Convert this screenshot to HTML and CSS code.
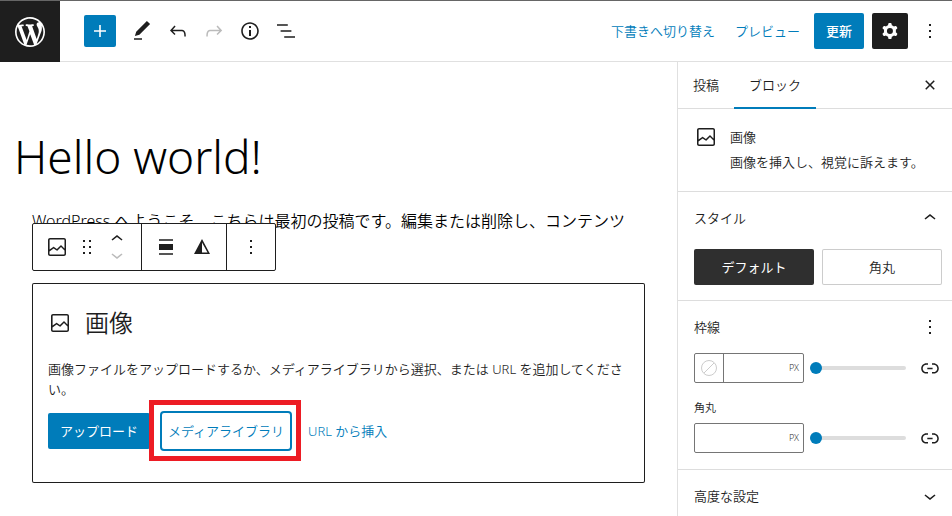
FILE: index.html
```html
<!DOCTYPE html>
<html lang="ja">
<head>
  <meta charset="UTF-8">
  <meta name="viewport" content="width=device-width, initial-scale=1.0">
  <title>投稿を編集</title>
  <link rel="stylesheet" href="styles.css">
</head>
<body>
  <svg class="sprite" aria-hidden="true">
    <symbol id="icon-image" viewBox="0 0 24 24"><path d="M19 3H5c-1.1 0-2 .9-2 2v14c0 1.1.9 2 2 2h14c1.1 0 2-.9 2-2V5c0-1.1-.9-2-2-2zM5 4.500h14c.3 0 .5.2.5.5v8.400l-3-2.900c-.3-.3-.8-.3-1 0L11.900 14 9 12c-.3-.2-.6-.2-.8 0l-3.600 2.600V5c-.1-.3.1-.5.4-.5zm14 15H5c-.3 0-.5-.2-.5-.5v-2.400l4.100-3 3 1.900c.3.2.7.2.9-.1L16 12l3.500 3.400V19c0 .3-.2.5-.5.5z"/></symbol>
    <symbol id="icon-more" viewBox="0 0 24 24"><path d="M13 19h-2v-2h2v2zm0-6h-2v-2h2v2zm0-6h-2V5h2v2z"/></symbol>
    <symbol id="icon-up" viewBox="0 0 24 24"><path d="M6.500 12.400L12 8l5.500 4.400-.9 1.200L12 10l-4.500 3.600-1-1.200z"/></symbol>
    <symbol id="icon-down" viewBox="0 0 24 24"><path d="M17.500 11.600L12 16l-5.500-4.400.9-1.200L12 14l4.500-3.600 1 1.200z"/></symbol>
    <symbol id="icon-link" viewBox="0 0 24 24"><path d="M15.600 7.200H14v1.500h1.600c2 0 3.700 1.700 3.700 3.700s-1.700 3.700-3.700 3.700H14v1.500h1.600c2.800 0 5.200-2.300 5.200-5.200 0-2.900-2.300-5.200-5.200-5.200zM4.700 12.400c0-2 1.700-3.700 3.700-3.700H10V7.200H8.400c-2.900 0-5.200 2.300-5.200 5.200 0 2.900 2.300 5.200 5.200 5.200H10v-1.500H8.400c-2 0-3.700-1.700-3.700-3.700zm4.600.9h5.300v-1.500H9.300v1.500z"/></symbol>
  </svg>

  <header class="header">
    <a class="logo" href="#" aria-label="投稿一覧">
      <svg width="36" height="36" viewBox="-2 -2 24 24"><path d="M20 10c0-5.510-4.490-10-10-10C4.480 0 0 4.490 0 10c0 5.520 4.480 10 10 10 5.510 0 10-4.480 10-10zM7.780 15.370L4.370 6.220c.55-.02 1.170-.08 1.170-.08.5-.06.44-1.130-.06-1.110 0 0-1.450.11-2.370.11-.18 0-.37 0-.58-.01C4.120 2.690 6.870 1.110 10 1.110c2.330 0 4.450.87 6.050 2.340-.68-.11-1.650.39-1.650 1.580 0 .74.45 1.360.9 2.100.35.61.55 1.360.55 2.460 0 1.490-1.400 5-1.400 5l-3.030-8.370c.54-.02.82-.17.82-.17.5-.05.44-1.250-.06-1.220 0 0-1.440.12-2.380.12-.87 0-2.330-.12-2.330-.12-.5-.03-.56 1.200-.06 1.220l.92.08 1.260 3.410zM17.410 10c.24-.64.74-1.870.43-4.250.7 1.290 1.050 2.710 1.050 4.250 0 3.290-1.730 6.240-4.400 7.780.97-2.590 1.940-5.200 2.920-7.780zM6.100 18.090C3.120 16.650 1.110 13.530 1.110 10c0-1.300.23-2.480.72-3.590C3.250 10.300 4.670 14.200 6.100 18.090zm4.030-6.630l2.580 6.980c-.86.29-1.760.45-2.710.45-.79 0-1.570-.11-2.290-.33.81-2.380 1.620-4.740 2.420-7.100z"/></svg>
    </a>
    <div class="tools">
      <button class="btn-add" aria-label="ブロックを追加"><svg class="icon" viewBox="0 0 24 24"><path d="M18 11.200h-5.200V6h-1.600v5.200H6v1.600h5.200V18h1.600v-5.200H18z"/></svg></button>
      <button class="tool" aria-label="ツール"><svg class="icon" viewBox="0 0 24 24"><path d="M20.100 5.100L16.900 2 6.200 12.700l-1.300 4.400 4.500-1.300L20.100 5.100zM4 20.800h8v-1.500H4v1.500z"/></svg></button>
      <button class="tool" aria-label="元に戻す"><svg class="icon" viewBox="0 0 24 24"><path d="M18.300 11.700c-.6-.6-1.400-.9-2.300-.9H6.700l2.900-3.300-1.100-1-4.500 5L8.500 16l1-1-2.700-2.700H16c.5 0 .9.2 1.300.5 1 1 1 3.400 1 4.500v.3h1.500v-.2c0-1.500 0-4.300-1.500-5.700z"/></svg></button>
      <button class="tool" aria-label="やり直す" disabled><svg class="icon" viewBox="0 0 24 24"><path d="M15.600 6.500l-1.100 1 2.900 3.300H8c-.9 0-1.700.3-2.300.9-1.400 1.500-1.400 4.200-1.400 5.600v.2h1.500v-.3c0-1.100 0-3.500 1-4.500.3-.3.7-.5 1.300-.5h9.200L14.500 15l1.100 1.100 4.600-4.600-4.600-5z"/></svg></button>
      <button class="tool" aria-label="詳細"><svg class="icon" viewBox="0 0 24 24"><path d="M12 3.200c-4.800 0-8.800 3.900-8.800 8.800 0 4.800 3.900 8.800 8.800 8.800 4.800 0 8.800-3.900 8.800-8.800 0-4.800-4-8.800-8.800-8.800zm0 16c-4 0-7.200-3.300-7.200-7.200C4.800 8 8 4.800 12 4.800s7.200 3.300 7.200 7.200c0 4-3.200 7.200-7.200 7.200zM11 17h2v-6h-2v6zm0-8h2V7h-2v2z"/></svg></button>
      <button class="tool" aria-label="リスト表示"><svg class="icon" viewBox="0 0 24 24"><path d="M13.800 5.200H3v1.500h10.800V5.200zm-3.600 12v1.500H21v-1.500H10.200zm7.200-6H6.600v1.500h10.800v-1.500z"/></svg></button>
    </div>
    <div class="actions">
      <button class="btn-text">下書きへ切り替え</button>
      <button class="btn-text">プレビュー</button>
      <button class="btn btn-primary btn-update">更新</button>
      <button class="btn-settings" aria-label="設定"><svg class="icon" viewBox="0 0 24 24"><path fill-rule="evenodd" d="M10.289 4.836A1 1 0 0111.275 4h1.306a1 1 0 01.987.836l.244 1.466c.787.26 1.503.679 2.108 1.218l1.393-.522a1 1 0 011.216.437l.653 1.130a1 1 0 01-.23 1.273l-1.148.944a6.025 6.025 0 010 2.435l1.149.946a1 1 0 01.23 1.272l-.653 1.130a1 1 0 01-1.216.437l-1.394-.522c-.605.54-1.320.958-2.108 1.218l-.244 1.466a1 1 0 01-.987.836h-1.306a1 1 0 01-.986-.836l-.244-1.466a5.995 5.995 0 01-2.108-1.218l-1.394.522a1 1 0 01-1.217-.436l-.653-1.131a1 1 0 01.23-1.272l1.149-.946a6.026 6.026 0 010-2.435l-1.148-.944a1 1 0 01-.23-1.272l.653-1.131a1 1 0 011.217-.437l1.393.522a5.994 5.994 0 012.108-1.218l.244-1.466zM14.929 12a3 3 0 11-6 0 3 3 0 016 0z"/></svg></button>
      <button class="btn-more" aria-label="オプション"><svg class="icon"><use href="#icon-more"/></svg></button>
    </div>
  </header>

  <div class="layout">
    <main class="editor">
      <h1 class="post-title">Hello world!</h1>
      <div class="blocks">
        <p class="paragraph">WordPress へようこそ。こちらは最初の投稿です。編集または削除し、コンテンツ</p>

        <div class="toolbar" role="toolbar" aria-label="ブロックツール">
          <div class="toolbar-group toolbar-move">
            <button class="tb" aria-label="画像"><svg class="icon"><use href="#icon-image"/></svg></button>
            <button class="tb" aria-label="ドラッグ"><svg class="icon" viewBox="0 0 24 24"><path d="M8 7h2V5H8v2zm0 6h2v-2H8v2zm0 6h2v-2H8v2zm6-14v2h2V5h-2zm0 8h2v-2h-2v2zm0 6h2v-2h-2v2z"/></svg></button>
            <div class="movers">
              <button class="mover" aria-label="上に移動"><svg class="icon"><use href="#icon-up"/></svg></button>
              <button class="mover" aria-label="下に移動" disabled><svg class="icon"><use href="#icon-down"/></svg></button>
            </div>
          </div>
          <div class="toolbar-group toolbar-style">
            <button class="tb" aria-label="配置"><svg class="icon" viewBox="0 0 24 24"><path d="M5 15h14V9H5v6zm0 4.800h14v-1.500H5v1.500zM5 4.200v1.500h14V4.200H5z"/></svg></button>
            <button class="tb" aria-label="デュオトーン"><svg class="icon" viewBox="0 0 24 24"><path fill-rule="evenodd" d="M12 4l8 15H4L12 4zm0 3.500v10h5.500L12 7.500z"/></svg></button>
          </div>
          <div class="toolbar-group toolbar-options">
            <button class="tb" aria-label="オプション"><svg class="icon"><use href="#icon-more"/></svg></button>
          </div>
        </div>

        <section class="placeholder">
          <h2 class="placeholder-title"><svg class="icon"><use href="#icon-image"/></svg>画像</h2>
          <p class="placeholder-text">画像ファイルをアップロードするか、メディアライブラリから選択、または URL を追加してください。</p>
          <div class="placeholder-actions">
            <button class="btn btn-primary">アップロード</button>
            <button class="btn-media">メディアライブラリ</button>
            <button class="btn-text btn-url">URL から挿入</button>
          </div>
        </section>
      </div>
    </main>

    <aside class="sidebar">
      <div class="tabs" role="tablist">
        <button class="tab" role="tab" aria-selected="false">投稿</button>
        <button class="tab active" role="tab" aria-selected="true">ブロック</button>
        <button class="close" aria-label="設定を閉じる"><svg class="icon" viewBox="0 0 24 24"><path d="M12 13.060l3.712 3.713 1.061-1.060L13.061 12l3.712-3.712-1.060-1.060L12 10.938 8.288 7.227l-1.061 1.060L10.939 12l-3.712 3.712 1.060 1.061L12 13.061z"/></svg></button>
      </div>

      <div class="block-card">
        <svg class="icon"><use href="#icon-image"/></svg>
        <div>
          <h2 class="block-name">画像</h2>
          <p class="block-desc">画像を挿入し、視覚に訴えます。</p>
        </div>
      </div>

      <section class="panel">
        <button class="panel-head" aria-expanded="true">スタイル<svg class="icon"><use href="#icon-up"/></svg></button>
        <div class="styles">
          <button class="style-item selected">デフォルト</button>
          <button class="style-item">角丸</button>
        </div>
      </section>

      <section class="panel">
        <div class="panel-head">
          <h2 class="panel-title">枠線</h2>
          <button class="icon-btn" aria-label="枠線のオプション"><svg class="icon"><use href="#icon-more"/></svg></button>
        </div>
        <div class="control-row">
          <div class="unit-field">
            <button class="swatch" aria-label="枠線の色"><svg width="18" height="18" viewBox="0 0 18 18"><circle cx="9" cy="9" r="7.500"/><path d="M4 14L14 4"/></svg></button>
            <input type="text" id="border-width" aria-label="枠線の幅">
            <label class="unit" for="border-width">PX</label>
          </div>
          <input class="slider" type="range" min="0" max="100" value="0" aria-label="枠線の幅">
          <button class="icon-btn" aria-label="連動を解除"><svg class="icon"><use href="#icon-link"/></svg></button>
        </div>
        <label class="control-label" for="radius">角丸</label>
        <div class="control-row">
          <div class="unit-field">
            <input type="text" id="radius">
            <span class="unit">PX</span>
          </div>
          <input class="slider" type="range" min="0" max="100" value="0" aria-label="角丸">
          <button class="icon-btn" aria-label="連動を解除"><svg class="icon"><use href="#icon-link"/></svg></button>
        </div>
      </section>

      <section class="panel">
        <button class="panel-head" aria-expanded="false">高度な設定<svg class="icon"><use href="#icon-down"/></svg></button>
      </section>
    </aside>
  </div>
</body>
</html>
```
FILE: styles.css
```css
* { box-sizing: border-box; }
body {
  margin: 0;
  min-height: 100vh;
  display: flex;
  flex-direction: column;
  background: #fff;
  color: #1e1e1e;
  font-family: "Noto Sans", "Noto Sans CJK JP", sans-serif;
  font-size: 13px;
  font-weight: 350;
  line-height: 20px;
  border-top: 1px solid #666;
}
h1, h2, p { margin: 0; font-weight: inherit; }
button {
  display: flex;
  align-items: center;
  justify-content: center;
  padding: 0;
  border: 0;
  background: none;
  color: inherit;
  font: inherit;
  white-space: nowrap;
  cursor: pointer;
}
button:disabled { color: #bbb; }
svg { fill: currentColor; flex: none; }
.icon { width: 24px; height: 24px; }
.sprite { display: none; }

/* header */
.header {
  display: flex;
  align-items: center;
  border-bottom: 1px solid #e0e0e0;
}
.logo {
  display: flex;
  align-items: center;
  justify-content: center;
  width: 60px;
  height: 61px;
  margin-bottom: -1px;
  background: #1e1e1e;
  color: #fff;
}
.tools {
  display: flex;
  align-items: center;
  padding-left: 24px;
}
.tool { width: 36px; height: 36px; }
.btn-add {
  width: 32px;
  height: 32px;
  margin-right: 8px;
  border-radius: 2px;
  background: #007cba;
  color: #fff;
}
.actions {
  display: flex;
  align-items: center;
  gap: 8px;
  margin-left: auto;
  padding-right: 8px;
}
.btn {
  height: 36px;
  padding: 0 12px;
  border-radius: 2px;
}
.btn-primary {
  background: #007cba;
  color: #fff;
  font-weight: 400;
}
.btn-update { font-weight: 500; }
.btn-text {
  height: 36px;
  padding: 0 6px;
  color: #007cba;
}
.btn-settings {
  width: 36px;
  height: 36px;
  border-radius: 2px;
  background: #1e1e1e;
  color: #fff;
}
.btn-more { width: 28px; height: 36px; }

/* editor */
.layout { display: flex; flex: 1; }
.editor {
  flex: 1;
  min-width: 0;
  padding: 62px 32px 32px;
}
.post-title {
  margin: 0 -18px 19px;
  color: #000;
  font-size: 46px;
  font-weight: 300;
  line-height: 64px;
}
.blocks { position: relative; }
.paragraph {
  margin-bottom: 48px;
  color: #000;
  font-size: 16px;
  line-height: 28px;
}
.toolbar {
  position: absolute;
  top: 16px;
  left: 0;
  display: flex;
  height: 48px;
  border: 1px solid #1e1e1e;
  border-radius: 2px;
  background: #fff;
}
.toolbar-group {
  display: flex;
  align-items: center;
  padding: 0 12px;
}
.toolbar-group + .toolbar-group { border-left: 1px solid #1e1e1e; }
.toolbar-move { gap: 6px; }
.toolbar-style { gap: 12px; }
.tb { height: 46px; }
.mover { height: 16px; overflow: hidden; }
.placeholder {
  min-height: 200px;
  padding: 24px 16px 32px;
  border-radius: 2px;
  box-shadow: inset 0 0 0 1px #1e1e1e;
}
.placeholder-title {
  display: flex;
  align-items: center;
  gap: 13px;
  margin-bottom: 20px;
  font-size: 24px;
  line-height: 32px;
}
.placeholder-text { margin-bottom: 14px; }
.placeholder-actions {
  display: flex;
  gap: 12px;
}
.btn-media {
  position: relative;
  height: 36px;
  padding: 0 6px;
  border-radius: 2px;
  box-shadow: 0 0 0 2px #007cba;
  color: #007cba;
}
.btn-media::after {
  content: "";
  position: absolute;
  inset: -13px -11px -12px -13px;
  border: 5px solid #ed1c24;
}

/* sidebar */
.sidebar {
  width: 275px;
  border-left: 1px solid #e0e0e0;
}
.tabs {
  display: flex;
  height: 47px;
  border-bottom: 1px solid #ddd;
}
.tab {
  height: 47px;
  padding: 0 15px 2px;
}
.tab.active { box-shadow: inset 0 -2px 0 #007cba; }
.close { margin: 0 10px 0 auto; }
.block-card {
  display: flex;
  gap: 12px;
  padding: 16px 16px 18px;
}
.block-name {
  margin-bottom: 2px;
  font-size: 13px;
  line-height: 24px;
}
.block-desc { line-height: 22px; }
.panel {
  border-top: 1px solid #ddd;
  padding: 0 10px 0 16px;
}
.panel-head {
  display: flex;
  align-items: center;
  justify-content: space-between;
  width: 100%;
  height: 52px;
}
.panel-title { font-size: 13px; }
.styles {
  display: grid;
  grid-template-columns: 1fr 1fr;
  gap: 8px;
  padding: 5px 0 15px;
}
.style-item {
  height: 36px;
  border-radius: 2px;
  box-shadow: inset 0 0 0 1px #ccc;
}
.style-item.selected {
  background: #2f2f2f;
  box-shadow: none;
  color: #fff;
  font-weight: 400;
}
.control-row {
  display: flex;
  align-items: center;
  margin-bottom: 16px;
}
.unit-field {
  display: flex;
  align-items: center;
  width: 110px;
  height: 30px;
  border: 1px solid #757575;
  border-radius: 2px;
}
.unit-field input {
  flex: 1;
  min-width: 0;
  height: 28px;
  border: 0;
  background: none;
  font: inherit;
  outline: none;
}
.swatch {
  width: 29px;
  height: 28px;
  border-right: 1px solid #757575;
}
.swatch svg { fill: none; stroke: #ccc; }
.unit {
  padding-right: 4px;
  color: #333;
  font-size: 9px;
}
.control-label {
  display: block;
  margin-bottom: 6px;
  font-size: 11px;
  line-height: 18px;
}
.slider {
  flex: 1;
  min-width: 0;
  height: 12px;
  margin: 0 12px 0 6px;
  appearance: none;
  background: none;
}
.slider::-webkit-slider-runnable-track {
  height: 4px;
  border-radius: 2px;
  background: #ddd;
}
.slider::-webkit-slider-thumb {
  appearance: none;
  width: 12px;
  height: 12px;
  margin-top: -4px;
  border-radius: 50%;
  background: #007cba;
}
```
